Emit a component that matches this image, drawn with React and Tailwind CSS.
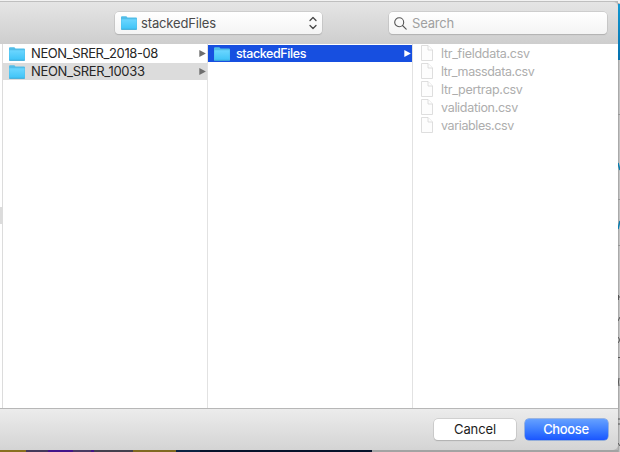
import React from "react";

function Folder() {
  return (
    <svg className="h-[14px] w-4 shrink-0" viewBox="0 0 16 14">
      <defs>
        <linearGradient id="folder" x1="0" y1="0" x2="0" y2="1">
          <stop offset="0" stopColor="#6bd6ff" />
          <stop offset="1" stopColor="#40c4f7" />
        </linearGradient>
      </defs>
      <path d="M0 1.2Q0 .3 1 .3H5Q5.8 .3 6.1 1L6.4 1.6H15Q16 1.6 16 2.5V13Q16 13.7 15.2 13.7H.8Q0 13.7 0 13Z" fill="#51bde8" />
      <path d="M.4 3.3H15.6V12.9H.4Z" fill="url(#folder)" />
      <path d="M.3 13.3H15.7" stroke="#36a6d3" strokeWidth=".8" />
    </svg>
  );
}

function FileIcon() {
  return (
    <svg className="h-4 w-3 shrink-0" viewBox="0 0 12 16" fill="#fdfdfd" stroke="#d5d5d5" strokeWidth=".8">
      <path d="M.5 .5H7L11.5 5V15.5H.5Z" />
      <path d="M7 .5V5H11.5" />
    </svg>
  );
}

function Row({ name, state = "", text }) {
  const tone = state === "active" ? "bg-[#174fe0] text-white font-medium" : state === "open" ? "bg-[#dcdcdc] text-[#262626]" : "text-[#262626]";
  return (
    <div className="h-[18px]">
      <div className={"flex h-[17px] items-center pl-[6px] pr-px " + tone}>
        <Folder />
        <span className={"ml-[6px] flex-1 whitespace-nowrap leading-[17px] " + text}>{name}</span>
        <svg className="h-[7px] w-[7px]" viewBox="0 0 7 7">
          <path d="M.3 0L6.9 3.5L.3 7Z" fill={state === "active" ? "#fff" : "#6e6e6e"} />
        </svg>
      </div>
    </div>
  );
}

const files = [
  ["ltr_fielddata.csv", "tracking-[-0.28px]"],
  ["ltr_massdata.csv", "tracking-[-0.38px]"],
  ["ltr_pertrap.csv", "tracking-[-0.28px]"],
  ["validation.csv", "tracking-[-0.3px]"],
  ["variables.csv", "tracking-[-0.38px]"],
];

function PageEdge() {
  return (
    <svg className="h-[452px] w-[2px] shrink-0" viewBox="0 0 2 452">
      <defs>
        <linearGradient id="banner" x1="0" y1="0" x2="0" y2="1">
          <stop offset="0" stopColor="#1398d2" />
          <stop offset="1" stopColor="#0670ad" />
        </linearGradient>
      </defs>
      <rect width="2" height="452" fill="#c4c4c4" />
      <rect width="1" height="452" fill="#aaaaaa" />
      <rect width="2" height="3" fill="#f2f2f2" />
      <rect y="4" width="2" height="56" fill="url(#banner)" />
      <path d="M0 114.5H2M0 199.5H2M0 245.5H2" stroke="#969696" />
      <path d="M0 163L2 170M2 221L0 229" stroke="#087daf" strokeWidth="1.5" />
      <path d="M.5 295V300M1 297H2M0 321L2 317M0 337L2 340L0 343M0 357.5H2M1 378Q0 382 1 386M0 419H2M0 424H2M0 443L2 446" fill="none" stroke="#555" />
    </svg>
  );
}

export default function App() {
  return (
    <div className="flex h-[452px] w-[620px] overflow-hidden bg-[#b7b7b7] font-[Inter,sans-serif] text-[13px]">
      <div className="flex w-[618px] flex-col">
        <div className="h-px bg-[#f2f2f2]" />
        <header className="flex h-[43px] shrink-0 rounded-tr-[5px] border-t border-[#bfbfbf] bg-linear-to-b from-[#e5e5e5] to-[#cecece] pt-[10px]">
          <div className="ml-[115px] flex h-[22px] w-[207px] items-center rounded-[4px] bg-linear-to-b from-white to-[#f4f4f4] pl-[6px] pr-[5px] text-[#4a4a4a] shadow-[0_0_0_0.5px_#b9b9b9,0_1px_1px_#aaa]">
            <Folder />
            <span className="ml-[4px] flex-1 leading-[22px] tracking-[-0.15px]">stackedFiles</span>
            <svg className="h-[14px] w-2" viewBox="0 0 8 14" fill="none" stroke="#484848" strokeWidth="1.3" strokeLinecap="round" strokeLinejoin="round">
              <path d="M1 4.5L4 1.5L7 4.5M1 9.5L4 12.5L7 9.5" />
            </svg>
          </div>
          <div className="ml-[67px] flex h-[22px] w-[218px] items-center rounded-[4px] bg-linear-to-b from-white to-[#f4f4f4] pl-[5px] text-[#a0a0a0] shadow-[0_0_0_0.5px_#b9b9b9,0_1px_1px_#aaa]">
            <svg className="h-[13px] w-[13px]" viewBox="0 0 13 13" fill="none" stroke="#555" strokeWidth="1.1" strokeLinecap="round">
              <circle cx="5.2" cy="5.2" r="4.5" />
              <path d="M8.5 8.5L12.2 12.2" />
            </svg>
            <span className="ml-[5px] leading-[22px] tracking-[-0.2px]">Search</span>
          </div>
        </header>
        <main className="flex h-[364px] shrink-0 bg-white">
          <div className="w-[3px] shrink-0 border-r border-[#dcdcdc] pt-[163px]">
            <div className="h-[17px] w-[2px] bg-[#dcdcdc]" />
          </div>
          <div className="w-[205px] shrink-0 border-r border-[#e2e2e2] pt-px">
            <Row name="NEON_SRER_2018-08" text="tracking-[-0.4px]" />
            <Row name="NEON_SRER_10033" state="open" text="tracking-[-0.32px]" />
          </div>
          <div className="w-[205px] shrink-0 border-r border-[#e2e2e2] pt-px">
            <Row name="stackedFiles" state="active" text="text-[12.5px] tracking-[-0.4px]" />
          </div>
          <div className="w-[205px] pl-[8px] text-[12.5px] text-[#adadad]">
            {files.map(([name, text]) => (
              <div key={name} className="flex h-[18px] items-center">
                <FileIcon />
                <span className={"ml-[8px] whitespace-nowrap pt-[2px] leading-[18px] " + text}>{name}</span>
              </div>
            ))}
          </div>
        </main>
        <footer className="flex h-[42px] shrink-0 justify-end gap-[9px] rounded-br-[5px] border-t border-[#b7b7b7] bg-linear-to-b from-[#ececec] to-[#d4d4d4] pr-[10px] pt-[10px]">
          <button className="h-[21px] w-[82px] rounded-[4px] bg-white leading-[21px] tracking-[-0.1px] text-[#1c1c1c] shadow-[0_0_0_0.5px_#bababa,0_1px_1px_#aaa]">Cancel</button>
          <button className="h-[21px] w-[83px] rounded-[4px] bg-linear-to-b from-[#65a0ff] to-[#1b55ff] pr-px font-medium leading-[21px] tracking-[-0.35px] text-white shadow-[0_0_0_0.5px_#4f82d9]">Choose</button>
        </footer>
        <div className="flex h-[2px]">
          <i className="w-[26px] bg-[#89701f]" />
          <i className="w-[22px] bg-[#44395a]" />
          <i className="w-[25px] bg-[#43148a]" />
          <i className="w-[18px] bg-[#493b62]" />
          <i className="w-[3px] bg-[#431588]" />
          <i className="w-[39px] bg-[#44404e]" />
          <i className="w-[43px] bg-[#806920]" />
          <i className="w-[24px] bg-[#0b2343]" />
          <i className="w-[172px] bg-[#07132b]" />
          <i className="flex-1 bg-[#a3a3a3]" />
        </div>
      </div>
      <PageEdge />
    </div>
  );
}
